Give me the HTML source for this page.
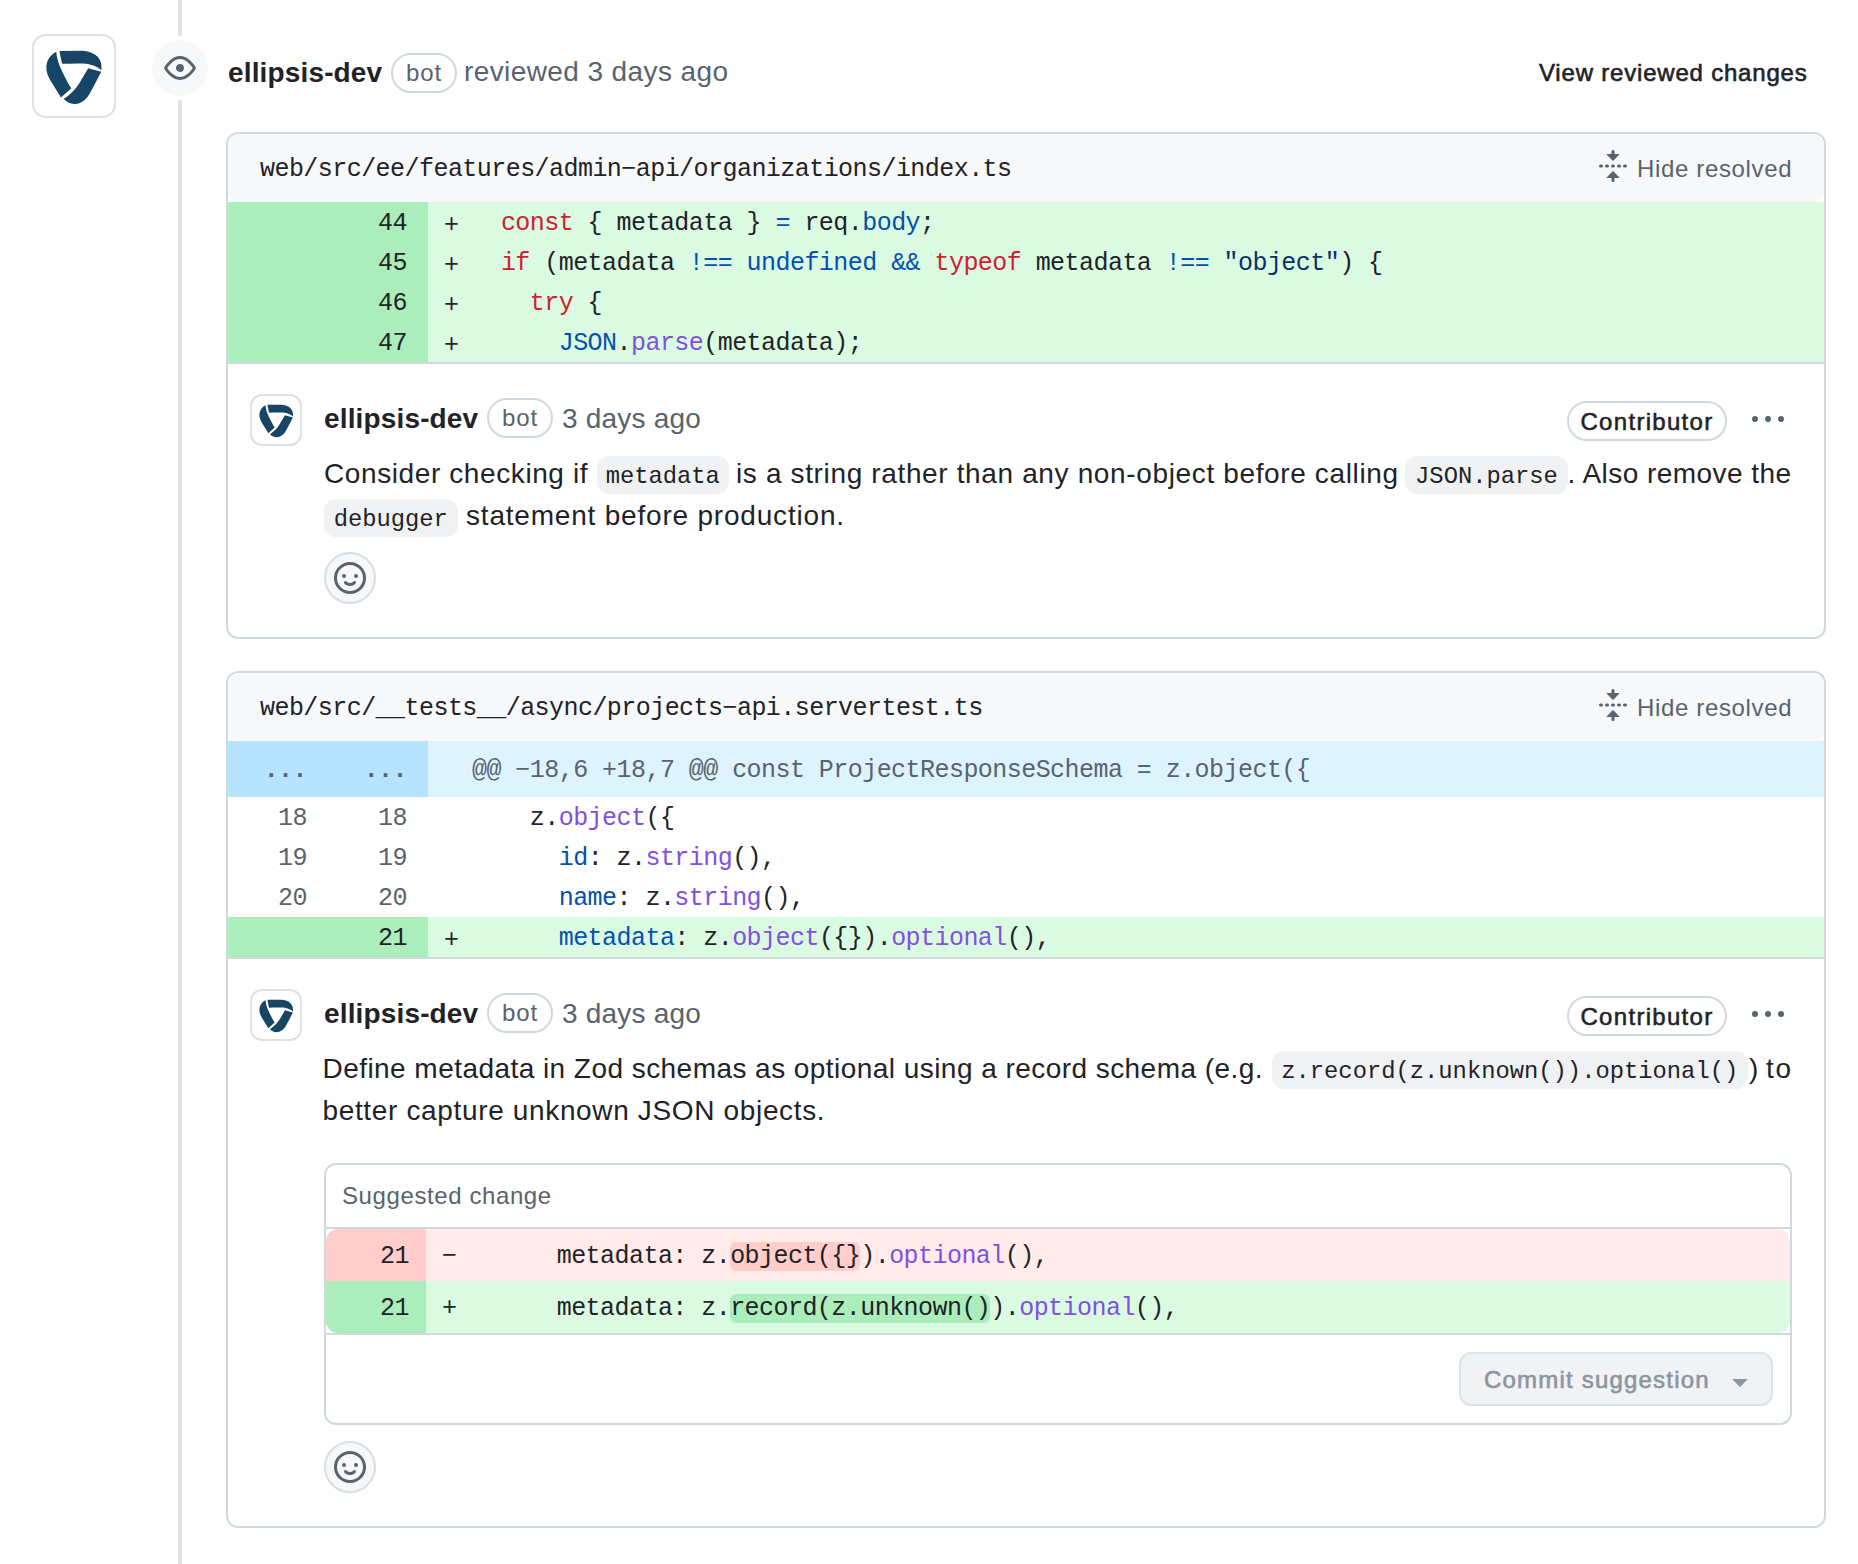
<!DOCTYPE html>
<html><head><meta charset="utf-8">
<style>
*{box-sizing:border-box;margin:0;padding:0}
html,body{width:1858px;height:1564px;overflow:hidden;background:#fff}
body{position:relative;font-family:"Liberation Sans",sans-serif;color:#1f2328}
.a{position:absolute;white-space:pre}
.mono{font-family:"Liberation Mono",monospace;letter-spacing:-0.55px}
.line{position:absolute;left:178px;top:0;width:4px;height:1564px;background:#dfe3e8}
.avatar{position:absolute;background:#fff;border:2px solid #dce1e6}
.badge{position:absolute;left:148px;top:36px;width:64px;height:64px;border-radius:50%;background:#f6f8fa;border:4px solid #fff}
.box{position:absolute;left:226px;width:1600px;border:2px solid #d1d9e0;border-radius:12px;background:#fff}
.fhead{position:absolute;left:228px;width:1596px;height:68px;background:#f6f8fa;border-radius:10px}
.row{position:absolute;left:228px;width:1596px;height:40px}
.num{position:absolute;top:0;height:100%;text-align:right;padding-right:21px;padding-top:2px;font-family:"Liberation Mono",monospace;font-size:25px;letter-spacing:-0.55px;line-height:40px}
.code{position:absolute;top:0;height:100%;padding-top:2px;font-family:"Liberation Mono",monospace;font-size:25px;letter-spacing:-0.55px;line-height:40px;white-space:pre}
.code.add{left:200px;right:0;background:#dafbe1}
.code{padding-left:44px}
.mk{position:absolute;left:16px;top:4px}
.hd{background:#ffcecb;border-radius:6px}
.ha{background:#aceebb;border-radius:6px}
.sep{position:absolute;left:228px;width:1596px;height:2px;background:#d1d9e0}
.name{font-weight:bold;font-size:28px;line-height:42px;color:#1f2328;letter-spacing:0.15px}
.muted{color:#59636e}
.pill{position:absolute;border:2px solid #d1d9e0;border-radius:20px;font-size:24px;letter-spacing:0.8px;color:#59636e;text-align:center}
.body{font-size:28px;line-height:42px;letter-spacing:0.55px;color:#1f2328}
.ic{background:#eff1f3;border-radius:12px;font-family:"Liberation Mono",monospace;font-size:23.8px;letter-spacing:0;padding:6px 9.5px}
.emoji{position:absolute;left:324px;width:52px;height:52px;border-radius:50%;background:#f6f8fa;border:2px solid #d8dee4}
.muted{color:#59636e !important}
.med{-webkit-text-stroke:0.6px #1f2328}
.icb{height:38px;background:#eff1f3;border-radius:12px;font-family:"Liberation Mono",monospace;font-size:23.8px;line-height:42px;text-align:center;white-space:pre;color:#1f2328}
.r{color:#cf222e}.b{color:#0550ae}.p{color:#8250df}.s{color:#0a3069}
</style></head>
<body>
<div class="line"></div>

<!-- big avatar -->
<div class="avatar" style="left:32px;top:34px;width:84px;height:84px;border-radius:14px"></div>
<svg class="a" style="left:44px;top:48px" width="60" height="60" viewBox="0 0 1564 1564">
  <g fill="#174566">
    <path d="M318 98 C200 160 80 280 62 470 C50 620 110 760 200 900 L442 1292 L712 1052 C600 860 470 620 400 440 C350 310 330 200 318 98 Z"/>
    <path d="M402 78 L1000 74 C1150 80 1300 130 1400 230 C1480 320 1510 440 1497 582 C1420 510 1300 440 1100 410 C900 395 700 405 470 412 Z"/>
    <path d="M1152 528 L1492 618 C1420 760 1320 960 1200 1170 C1120 1320 1000 1440 800 1462 C680 1465 580 1400 512 1332 C680 1210 800 1100 900 950 C990 810 1080 650 1152 528 Z"/>
  </g>
</svg>

<!-- timeline badge -->
<div class="badge"></div>
<svg class="a" style="left:164px;top:52px" width="32" height="32" viewBox="0 0 16 16"><path fill="#59636e" d="M8 2c1.981 0 3.671.992 4.933 2.078 1.27 1.091 2.187 2.345 2.637 3.023a1.62 1.62 0 0 1 0 1.798c-.45.678-1.367 1.932-2.637 3.023C11.67 13.008 9.981 14 8 14c-1.981 0-3.671-.992-4.933-2.078C1.797 10.83.88 9.576.43 8.898a1.62 1.62 0 0 1 0-1.798c.45-.677 1.367-1.931 2.637-3.022C4.33 2.992 6.019 2 8 2ZM1.679 7.932a.12.12 0 0 0 0 .136c.411.622 1.241 1.75 2.366 2.717C5.176 11.758 6.527 12.5 8 12.5c1.473 0 2.825-.742 3.955-1.715 1.124-.967 1.954-2.096 2.366-2.717a.12.12 0 0 0 0-.136c-.412-.621-1.242-1.75-2.366-2.717C10.824 4.242 9.473 3.5 8 3.5c-1.473 0-2.825.742-3.955 1.715-1.124.967-1.954 2.096-2.366 2.717ZM8 10a2 2 0 1 1-.001-3.999A2 2 0 0 1 8 10Z"/></svg>

<!-- review header -->
<div class="a name" style="left:228px;top:52px">ellipsis-dev</div>
<div class="pill" style="left:391px;top:53px;width:66px;height:40px;line-height:36px">bot</div>
<div class="a body muted" style="left:464px;top:51px;letter-spacing:0.4px">reviewed 3 days ago</div>
<div class="a med" style="left:1539px;top:58px;font-size:24px;line-height:30px;letter-spacing:0.8px">View reviewed changes</div>

<!-- ============ BOX 1 ============ -->
<div class="box" style="top:132px;height:507px"></div>
<div class="fhead" style="top:134px"></div>
<div class="a mono" style="left:260px;top:152px;font-size:25px;line-height:36px">web/src/ee/features/admin&#x2212;api/organizations/index.ts</div>
<svg class="a" style="left:1597px;top:150px" width="32" height="32" viewBox="0 0 16 16"><path fill="#59636e" d="M10.896 2H8.75V.75a.75.75 0 0 0-1.5 0V2H5.104a.25.25 0 0 0-.177.427l2.896 2.896a.25.25 0 0 0 .354 0l2.896-2.896A.25.25 0 0 0 10.896 2ZM8.75 15.25a.75.75 0 0 1-1.5 0V14H5.104a.25.25 0 0 1-.177-.427l2.896-2.896a.25.25 0 0 1 .354 0l2.896 2.896a.25.25 0 0 1-.177.427H8.75v1.25Zm-6.5-6.5a.75.75 0 0 0 0-1.5h-.5a.75.75 0 0 0 0 1.5h.5ZM6 8a.75.75 0 0 1-.75.75h-.5a.75.75 0 0 1 0-1.5h.5A.75.75 0 0 1 6 8Zm2.25.75a.75.75 0 0 0 0-1.5h-.5a.75.75 0 0 0 0 1.5h.5ZM12 8a.75.75 0 0 1-.75.75h-.5a.75.75 0 0 1 0-1.5h.5A.75.75 0 0 1 12 8Zm2.25.75a.75.75 0 0 0 0-1.5h-.5a.75.75 0 0 0 0 1.5h.5Z"/></svg>
<div class="a body muted" style="left:1637px;top:149px;font-size:24px;line-height:40px;letter-spacing:0.65px">Hide resolved</div>

<div class="row" style="top:202px"><div class="num" style="left:0;width:200px;background:#aceebb">44</div><div class="code add"><span class="mk">+</span>  <span class="r">const</span> { metadata } <span class="b">=</span> req.<span class="b">body</span>;</div></div>
<div class="row" style="top:242px"><div class="num" style="left:0;width:200px;background:#aceebb">45</div><div class="code add"><span class="mk">+</span>  <span class="r">if</span> (metadata <span class="b">!==</span> <span class="b">undefined</span> <span class="b">&amp;&amp;</span> <span class="r">typeof</span> metadata <span class="b">!==</span> <span class="s">"object"</span>) {</div></div>
<div class="row" style="top:282px"><div class="num" style="left:0;width:200px;background:#aceebb">46</div><div class="code add"><span class="mk">+</span>    <span class="r">try</span> {</div></div>
<div class="row" style="top:322px"><div class="num" style="left:0;width:200px;background:#aceebb">47</div><div class="code add"><span class="mk">+</span>      <span class="b">JSON</span>.<span class="p">parse</span>(metadata);</div></div>
<div class="sep" style="top:362px"></div>

<!-- comment 1 -->
<div class="avatar" style="left:250px;top:394px;width:52px;height:52px;border-radius:12px"></div>
<svg class="a" style="left:257.6px;top:402.7px" width="36.6" height="36.6" viewBox="0 0 1564 1564">
  <g fill="#174566">
    <path d="M318 98 C200 160 80 280 62 470 C50 620 110 760 200 900 L442 1292 L712 1052 C600 860 470 620 400 440 C350 310 330 200 318 98 Z"/>
    <path d="M402 78 L1000 74 C1150 80 1300 130 1400 230 C1480 320 1510 440 1497 582 C1420 510 1300 440 1100 410 C900 395 700 405 470 412 Z"/>
    <path d="M1152 528 L1492 618 C1420 760 1320 960 1200 1170 C1120 1320 1000 1440 800 1462 C680 1465 580 1400 512 1332 C680 1210 800 1100 900 950 C990 810 1080 650 1152 528 Z"/>
  </g>
</svg>
<div class="a name" style="left:324px;top:398px">ellipsis-dev</div>
<div class="pill" style="left:487px;top:398px;width:66px;height:40px;line-height:36px">bot</div>
<div class="a body muted" style="left:562px;top:398px;letter-spacing:0.2px">3 days ago</div>
<div class="pill" style="left:1567px;top:401px;width:160px;height:40px;line-height:35px;color:#1f2328;letter-spacing:1.3px;-webkit-text-stroke:0.55px #1f2328;padding-top:1px">Contributor</div>
<svg class="a" style="left:1752px;top:404px" width="32" height="32" viewBox="0 0 16 16"><path fill="#59636e" d="M8 9a1.5 1.5 0 1 0 0-3 1.5 1.5 0 0 0 0 3ZM1.5 9a1.5 1.5 0 1 0 0-3 1.5 1.5 0 0 0 0 3Zm13 0a1.5 1.5 0 1 0 0-3 1.5 1.5 0 0 0 0 3Z"/></svg>
<div class="a body" style="left:324px;top:453px;letter-spacing:0.6px">Consider checking if</div>
<div class="a icb" style="left:596.5px;top:456px;width:132.5px">metadata</div>
<div class="a body" style="left:736px;top:453px;letter-spacing:0.64px">is a string rather than any non-object before calling</div>
<div class="a icb" style="left:1405px;top:456px;width:163px">JSON.parse</div>
<div class="a body" style="left:1567.5px;top:453px;letter-spacing:0.46px">. Also remove the</div>
<div class="a icb" style="left:324px;top:498.5px;width:133.5px">debugger</div>
<div class="a body" style="left:466px;top:495px;letter-spacing:0.8px">statement before production.</div>
<div class="emoji" style="top:552px"></div>
<svg class="a" style="left:334px;top:562px" width="32" height="32" viewBox="0 0 16 16"><path fill="#59636e" d="M8 0a8 8 0 1 1 0 16A8 8 0 0 1 8 0ZM1.5 8a6.5 6.5 0 1 0 13 0 6.5 6.5 0 0 0-13 0Zm3.82 1.636a.75.75 0 0 1 1.038.175l.007.009c.103.118.22.222.35.31.264.178.683.37 1.285.37.602 0 1.02-.192 1.285-.371.13-.088.247-.192.35-.31l.007-.008a.75.75 0 0 1 1.222.87l-.022-.015c.02.013.021.015.021.015v.001l-.001.002-.002.003-.005.007-.014.019a2.066 2.066 0 0 1-.184.213c-.16.166-.338.316-.53.445-.63.418-1.37.638-2.127.629-.946 0-1.652-.308-2.126-.63a3.331 3.331 0 0 1-.715-.657l-.014-.02-.005-.006-.002-.003v-.002h-.001l.613-.432-.614.43a.75.75 0 0 1 .183-1.044ZM12 7a1 1 0 1 1-2 0 1 1 0 0 1 2 0ZM5 8a1 1 0 1 1 0-2 1 1 0 0 1 0 2Zm5.25 2.25.592.416a97.71 97.71 0 0 0-.592-.416Z"/></svg>


<!-- ============ BOX 2 ============ -->
<div class="box" style="top:671px;height:857px"></div>
<div class="fhead" style="top:673px"></div>
<div class="a mono" style="left:260px;top:691px;font-size:25px;line-height:36px">web/src/__tests__/async/projects&#x2212;api.servertest.ts</div>
<svg class="a" style="left:1597px;top:689px" width="32" height="32" viewBox="0 0 16 16"><path fill="#59636e" d="M10.896 2H8.75V.75a.75.75 0 0 0-1.5 0V2H5.104a.25.25 0 0 0-.177.427l2.896 2.896a.25.25 0 0 0 .354 0l2.896-2.896A.25.25 0 0 0 10.896 2ZM8.75 15.25a.75.75 0 0 1-1.5 0V14H5.104a.25.25 0 0 1-.177-.427l2.896-2.896a.25.25 0 0 1 .354 0l2.896 2.896a.25.25 0 0 1-.177.427H8.75v1.25Zm-6.5-6.5a.75.75 0 0 0 0-1.5h-.5a.75.75 0 0 0 0 1.5h.5ZM6 8a.75.75 0 0 1-.75.75h-.5a.75.75 0 0 1 0-1.5h.5A.75.75 0 0 1 6 8Zm2.25.75a.75.75 0 0 0 0-1.5h-.5a.75.75 0 0 0 0 1.5h.5ZM12 8a.75.75 0 0 1-.75.75h-.5a.75.75 0 0 1 0-1.5h.5A.75.75 0 0 1 12 8Zm2.25.75a.75.75 0 0 0 0-1.5h-.5a.75.75 0 0 0 0 1.5h.5Z"/></svg>
<div class="a body muted" style="left:1637px;top:688px;font-size:24px;line-height:40px;letter-spacing:0.65px">Hide resolved</div>

<div class="row" style="top:741px;height:56px"><div class="num muted" style="left:0;width:100px;background:#b6e3ff;line-height:56px;font-weight:bold">...</div><div class="num muted" style="left:100px;width:100px;background:#b6e3ff;line-height:56px;font-weight:bold">...</div><div class="code muted" style="left:200px;right:0;background:#ddf4ff;line-height:56px">@@ &#x2212;18,6 +18,7 @@ const ProjectResponseSchema = z.object({</div></div>
<div class="row" style="top:797px"><div class="num muted" style="left:0;width:100px">18</div><div class="num muted" style="left:100px;width:100px">18</div><div class="code" style="left:200px;right:0">    z.<span class="p">object</span>({</div></div>
<div class="row" style="top:837px"><div class="num muted" style="left:0;width:100px">19</div><div class="num muted" style="left:100px;width:100px">19</div><div class="code" style="left:200px;right:0">      <span class="b">id</span>: z.<span class="p">string</span>(),</div></div>
<div class="row" style="top:877px"><div class="num muted" style="left:0;width:100px">20</div><div class="num muted" style="left:100px;width:100px">20</div><div class="code" style="left:200px;right:0">      <span class="b">name</span>: z.<span class="p">string</span>(),</div></div>
<div class="row" style="top:917px"><div class="num" style="left:0;width:200px;background:#aceebb">21</div><div class="code add"><span class="mk">+</span>      <span class="b">metadata</span>: z.<span class="p">object</span>({}).<span class="p">optional</span>(),</div></div>
<div class="sep" style="top:957px"></div>

<!-- comment 2 -->
<div class="avatar" style="left:250px;top:989px;width:52px;height:52px;border-radius:12px"></div>
<svg class="a" style="left:257.6px;top:997.7px" width="36.6" height="36.6" viewBox="0 0 1564 1564">
  <g fill="#174566">
    <path d="M318 98 C200 160 80 280 62 470 C50 620 110 760 200 900 L442 1292 L712 1052 C600 860 470 620 400 440 C350 310 330 200 318 98 Z"/>
    <path d="M402 78 L1000 74 C1150 80 1300 130 1400 230 C1480 320 1510 440 1497 582 C1420 510 1300 440 1100 410 C900 395 700 405 470 412 Z"/>
    <path d="M1152 528 L1492 618 C1420 760 1320 960 1200 1170 C1120 1320 1000 1440 800 1462 C680 1465 580 1400 512 1332 C680 1210 800 1100 900 950 C990 810 1080 650 1152 528 Z"/>
  </g>
</svg>
<div class="a name" style="left:324px;top:993px">ellipsis-dev</div>
<div class="pill" style="left:487px;top:993px;width:66px;height:40px;line-height:36px">bot</div>
<div class="a body muted" style="left:562px;top:993px;letter-spacing:0.2px">3 days ago</div>
<div class="pill" style="left:1567px;top:996px;width:160px;height:40px;line-height:35px;color:#1f2328;letter-spacing:1.3px;-webkit-text-stroke:0.55px #1f2328;padding-top:1px">Contributor</div>
<svg class="a" style="left:1752px;top:999px" width="32" height="32" viewBox="0 0 16 16"><path fill="#59636e" d="M8 9a1.5 1.5 0 1 0 0-3 1.5 1.5 0 0 0 0 3ZM1.5 9a1.5 1.5 0 1 0 0-3 1.5 1.5 0 0 0 0 3Zm13 0a1.5 1.5 0 1 0 0-3 1.5 1.5 0 0 0 0 3Z"/></svg>
<div class="a body" style="left:322.5px;top:1048px;letter-spacing:0.45px">Define metadata in Zod schemas as optional using a record schema (e.g.</div>
<div class="a icb" style="left:1271.5px;top:1051px;width:476.5px">z.record(z.unknown()).optional()</div>
<div class="a body" style="left:1749px;top:1048px;letter-spacing:0px">)</div>
<div class="a body" style="left:1766px;top:1048px;letter-spacing:1.8px">to</div>
<div class="a body" style="left:322.5px;top:1090px;letter-spacing:0.65px">better capture unknown JSON objects.</div>

<!-- suggested change -->
<div class="a" style="left:324px;top:1163px;width:1468px;height:262px;border:2px solid #d1d9e0;border-radius:12px"></div>
<div class="a muted" style="left:342px;top:1181px;font-size:24px;line-height:30px;letter-spacing:0.6px">Suggested change</div>
<div class="a" style="left:326px;top:1227px;width:1464px;height:2px;background:#d1d9e0"></div>
<div class="a" style="left:326px;top:1229px;width:1464px;height:104px;border-radius:12px;overflow:hidden">
  <div class="row" style="left:0;top:0;width:100%;height:52px"><div class="num" style="left:0;width:100px;background:#ffcecb;padding-top:8px;padding-right:17px">21</div><div class="code" style="left:100px;right:0;background:#ffebe9;padding-top:8px"><span class="mk" style="top:8px">&minus;</span>      metadata: z.<span class="hd">object({}</span>).<span class="p">optional</span>(),</div></div>
  <div class="row" style="left:0;top:52px;width:100%;height:52px"><div class="num" style="left:0;width:100px;background:#aceebb;padding-top:8px;padding-right:17px">21</div><div class="code" style="left:100px;right:0;background:#dafbe1;padding-top:8px"><span class="mk" style="top:8px">+</span>      metadata: z.<span class="ha">record(z.unknown()</span>).<span class="p">optional</span>(),</div></div>
</div>
<div class="a" style="left:326px;top:1333px;width:1464px;height:2px;background:#d1d9e0"></div>
<div class="a" style="left:1459px;top:1352px;width:314px;height:54px;border:2px solid #dde2e7;border-radius:12px;background:#f0f2f4"></div>
<div class="a" style="left:1484px;top:1365px;font-size:24px;line-height:30px;color:#8c959f;letter-spacing:1.2px;-webkit-text-stroke:0.6px #8c959f">Commit suggestion</div>
<svg class="a" style="left:1724px;top:1365px" width="32" height="32" viewBox="0 0 16 16"><path fill="#8c959f" d="m4.427 7.427 3.396 3.396a.25.25 0 0 0 .354 0l3.396-3.396A.25.25 0 0 0 11.396 7H4.604a.25.25 0 0 0-.177.427Z"/></svg>

<div class="emoji" style="top:1441px"></div>
<svg class="a" style="left:334px;top:1451px" width="32" height="32" viewBox="0 0 16 16"><path fill="#59636e" d="M8 0a8 8 0 1 1 0 16A8 8 0 0 1 8 0ZM1.5 8a6.5 6.5 0 1 0 13 0 6.5 6.5 0 0 0-13 0Zm3.82 1.636a.75.75 0 0 1 1.038.175l.007.009c.103.118.22.222.35.31.264.178.683.37 1.285.37.602 0 1.02-.192 1.285-.371.13-.088.247-.192.35-.31l.007-.008a.75.75 0 0 1 1.222.87l-.022-.015c.02.013.021.015.021.015v.001l-.001.002-.002.003-.005.007-.014.019a2.066 2.066 0 0 1-.184.213c-.16.166-.338.316-.53.445-.63.418-1.37.638-2.127.629-.946 0-1.652-.308-2.126-.63a3.331 3.331 0 0 1-.715-.657l-.014-.02-.005-.006-.002-.003v-.002h-.001l.613-.432-.614.43a.75.75 0 0 1 .183-1.044ZM12 7a1 1 0 1 1-2 0 1 1 0 0 1 2 0ZM5 8a1 1 0 1 1 0-2 1 1 0 0 1 0 2Zm5.25 2.25.592.416a97.71 97.71 0 0 0-.592-.416Z"/></svg>

</body></html>
